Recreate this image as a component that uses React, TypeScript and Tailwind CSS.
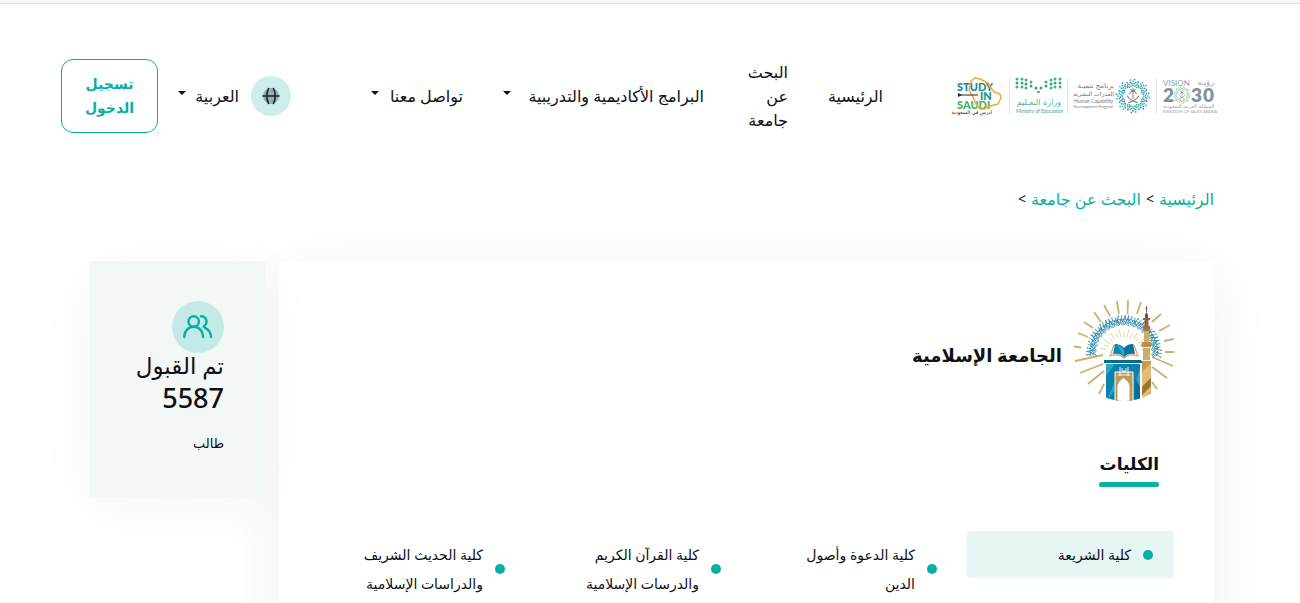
import type { ReactNode } from 'react'
import clsx from 'clsx'

const colleges = [
  { name: 'كلية الشريعة', active: true },
  { name: 'كلية الدعوة وأصول الدين' },
  { name: 'كلية القرآن الكريم والدرسات الإسلامية' },
  { name: 'كلية الحديث الشريف والدراسات الإسلامية' },
]

function Caret() {
  return (
    <svg width="8" height="4" viewBox="0 0 8 4" className="mb-1.5 shrink-0" aria-hidden="true">
      <path d="M0 0h8L4 4z" fill="currentColor" />
    </svg>
  )
}

function Divider() {
  return <span className="h-9 w-px bg-[#e4e4e4]" />
}

// Eight-fold rosette drawn from dots on a few rings
function Rosette({ cx, cy, r, colors }: { cx: number; cy: number; r: number; colors: string[] }) {
  const dots: ReactNode[] = []
  const rings = [0.6, 0.71, 0.82, 0.93]
  rings.forEach((ring, i) => {
    const count = i === 3 ? 24 : 32
    for (let k = 0; k < count; k++) {
      const a = (k / count) * Math.PI * 2 + (i % 2) * 0.1
      const wave = 1 + 0.07 * Math.cos(a * 8)
      dots.push(
        <circle
          key={`${i}-${k}`}
          cx={cx + Math.cos(a) * r * ring * wave}
          cy={cy + Math.sin(a) * r * ring * wave}
          r={r * 0.05}
          fill={colors[(k + i) % colors.length]}
        />,
      )
    }
  })
  return <g>{dots}</g>
}

function Palm({ x, y, s }: { x: number; y: number; s: number }) {
  return (
    <g transform={`translate(${x} ${y}) scale(${s})`} stroke="#7d8992" fill="none" strokeLinecap="round">
      <path d="M0 2V-4M0-4Q-2-5-3-2M0-4Q2-5 3-2M0-4-2-6M0-4 2-6M0-4V-7" strokeWidth="1" />
      <path d="M-5 0Q-3 4 4 6M5 0Q3 4-4 6" strokeWidth="1" />
    </g>
  )
}

function VisionLogo() {
  return (
    <svg width="52" height="40" viewBox="0 0 52 40" direction="ltr" className="overflow-visible" role="img" aria-label="رؤية 2030">
      <g fill="#98a2a8" fontFamily="Lato, sans-serif">
        <text x="0" y="10" fontSize="8">VISION</text>
        <text x="51" y="9" fontSize="8" textAnchor="end" fontFamily="'DejaVu Sans', sans-serif">رؤيـة</text>
        <g fill="#83919a" fontWeight="800" fontSize="19">
          <text x="0" y="26">2</text>
          <text x="28" y="26">3</text>
          <text x="40" y="26">0</text>
        </g>
        <text x="0" y="32" fontSize="5" fontFamily="'DejaVu Sans', sans-serif">المملكة العربية السعودية</text>
        <text x="0" y="37" fontSize="4">KINGDOM OF SAUDI ARABIA</text>
      </g>
      <Rosette cx={19} cy={19} r={9} colors={['#4cb584', '#3f9fb0', '#a5c95b']} />
      <Palm x={19} y={19} s={0.6} />
    </svg>
  )
}

function HumanCapabilityLogo() {
  return (
    <svg width="76" height="40" viewBox="0 0 76 40" direction="ltr" className="overflow-visible" role="img" aria-label="برنامج تنمية القدرات البشرية">
      <g fill="#75797c" textAnchor="end" fontFamily="'DejaVu Sans', sans-serif">
        <text x="40" y="12" fontSize="7">برنامج تنميـة</text>
        <text x="40" y="20" fontSize="6">القدرات البشرية</text>
        <g fontFamily="Lato, sans-serif">
          <text x="39" y="27" fontSize="5">Human Capability</text>
          <text x="39" y="32" fontSize="4">Development Program</text>
        </g>
      </g>
      <Rosette cx={59} cy={20} r={17} colors={['#2b9daf', '#2c8fa5', '#45b3ac']} />
      <Palm x={59} y={20} s={1.1} />
    </svg>
  )
}

const dotRows = [
  [1, 6, 10, 15, 30, 35, 39, 44],
  [1, 6, 10, 15, 20, 25, 30, 35, 39, 44],
  [1, 6, 10, 35, 39, 44],
]

function MinistryLogo() {
  return (
    <svg width="45" height="40" viewBox="0 0 45 40" direction="ltr" className="overflow-visible" role="img" aria-label="وزارة التعليم">
      {dotRows.map((row, r) =>
        row.map((x) => {
          const dip = Math.max(0, 6 - Math.abs(x - 22.5) / 2.5)
          return <circle key={`${r}-${x}`} cx={x} cy={3 + r * 4 + dip} r="1.5" fill={r % 2 ? '#3f9f86' : '#49b27c'} />
        }),
      )}
      <circle cx="22.5" cy="16" r="1.3" fill="#3f9f86" />
      <text x="45" y="29" textAnchor="end" fontSize="8" fill="#4fae93" fontFamily="'DejaVu Sans', sans-serif">
        وزارة التعـليم
      </text>
      <text x="0" y="37" fontSize="5" fill="#3e9fa6" fontFamily="Lato, sans-serif">
        Ministry of Education
      </text>
    </svg>
  )
}

function StudyLogo() {
  return (
    <svg width="46" height="40" viewBox="0 0 46 40" direction="ltr" className="overflow-visible" role="img" aria-label="ادرس في السعودية">
      <g fontFamily="Lato, sans-serif" fontWeight="900" fontSize="11">
        <text x="0" y="15" fill="#16899a">STUDY</text>
        <text x="23" y="24" fill="#1c9389">IN</text>
        <text x="0" y="33" fill="#4cad5c">SAUDI</text>
      </g>
      <path
        d="M14 5 18 2l5 1 8 4 3 5 3 4 6 2 1 4-3 6-8 2-6 3h-4l-4-5-3-7-4-7z"
        fill="none"
        stroke="#f2a93b"
        strokeWidth="1.500"
        strokeLinejoin="round"
      />
      <path d="M2 19H21" stroke="#222" strokeWidth="1" />
      <path d="M1 17l4 2-4 2z" fill="#222" />
      <text x="35" y="38" textAnchor="end" fontSize="5" fill="#111" fontFamily="'DejaVu Sans', sans-serif">
        ادرس في السعودية
      </text>
    </svg>
  )
}

const outerRays =
  'M54 0 53.500 14M43 1l2 13M30 5l6 11M20 12l7 10M10 22l9 6M4 33l10 4M0 46.500l7 1M1 61l28-6M6 73l23-9M14 84l16-13M25 94l5-10M67 2l-4 12M87 14l-9 8M96 25l-11 6M100 39l-10 2M100 52H91M99 66 78 57M93 78 78 67M83 89l-5-7'

// Calligraphy band: upright strokes, bowls and dots laid along the arch
function calligraphy() {
  const out: string[] = []
  const p = (r: number, t: number) => `${(50 + Math.cos(t) * r).toFixed(1)} ${(53 + Math.sin(t) * r).toFixed(1)}`
  for (let i = 0; i <= 72; i++) {
    const a = Math.PI * (0.97 + (i / 72) * 1.05)
    const top = 36 + ((i * 5) % 3)
    const base = 28 + ((i * 7) % 4)
    if (i % 3) out.push(`M${p(base + 2, a)}L${p(top, a + ((i % 4) - 1) * 0.05)}`)
    out.push(`M${p(base, a - 0.04)}Q${p(base - 1, a + 0.04)} ${p(base + 3, a + 0.08)}`)
    if (i % 2) out.push(`M${p(33, a - 0.06)}Q${p(36, a)} ${p(32, a + 0.07)}`)
    if (i % 4 === 0) out.push(`M${p(37, a + 0.03)}L${p(37, a + 0.07)}`)
  }
  return out.join('')
}

function innerRays() {
  const out: string[] = []
  for (let i = 0; i < 15; i++) {
    const a = Math.PI * (1.08 + i * 0.06)
    const r1 = 17
    const r2 = i % 2 ? 22 : 25
    out.push(
      `M${(50 + Math.cos(a) * r1).toFixed(1)} ${(54 + Math.sin(a) * r1).toFixed(1)}L${(50 + Math.cos(a) * r2).toFixed(1)} ${(54 + Math.sin(a) * r2).toFixed(1)}`,
    )
  }
  return out.join('')
}

function UniversityLogo() {
  return (
    <svg width="100" height="102" viewBox="0 0 100 102" className="shrink-0" role="img" aria-label="شعار الجامعة الإسلامية">
      <clipPath id="seal">
        <circle cx="50" cy="50" r="51" />
      </clipPath>
      <path d={outerRays} stroke="#cfb068" strokeWidth="1.800" />
      <path d={calligraphy()} stroke="#2685a3" strokeWidth="0.800" fill="none" />
      <path d={innerRays()} stroke="#dcc68e" strokeWidth="0.800" />
      <g>
        <path d="M40 45 36 56q9-3 14 2 5-5 14-2l-4-11q-6 0-10 4-4-4-10-4z" fill="#fff" stroke="#c9ab66" strokeWidth="1.200" />
        <path d="M41 44q6 0 9 4v9q-4-4-11-3z" fill="#0d86b4" />
        <path d="M59 44q-6 0-9 4v9q4-4 11-3z" fill="#0873a0" />
        <path d="m43 44 7 6v7z" fill="#37a9cf" />
      </g>
      <g clipPath="url(#seal)">
        <path d="M30 60h38v3H30z" fill="#086a8f" />
        <path d="M32 64h34v38H32z" fill="#0982ad" />
        <path d="M32 64h9L32 76zM32 102l8-11V84zM66 68l-4 13 4 8z" fill="#31a4c6" />
        <path d="m61 78 5 9v15h-5z" fill="#076d94" />
        <path d="M41 102V72h18v30z" fill="#bd995a" stroke="#fff" strokeWidth="1" />
        <path d="M43.500 102V87q0-5 6-9 6 4 6 9v15z" fill="#fff" />
        <path d="M46 67v9M54 67v9M44 75h12M48 68v3h4v-3M48 72h4" stroke="#fff" strokeWidth="0.900" fill="none" />
        <path d="M68 60h9v38l-9 4z" fill="#c39d55" />
        <path d="m68 72 9-9v14l-9 10zM68 95l9-9v5l-9 9z" fill="#dfbd77" />
        <path d="m68 87 9-9v8l-9 9z" fill="#9f7536" />
      </g>
      <path d="M69 47h7v13h-7z" fill="#d0ad67" />
      <path d="M68 42h9l1 3-2 3h-7l-2-3z" fill="#b8914a" />
      <path d="M70 31h5v11h-5z" fill="#cfad67" />
      <path d="M69 26h7v3l-1.500 2h-4L69 29z" fill="#9b7441" />
      <path d="M70.500 20h4v6h-4zM69 18h7v2h-7z" fill="#8b6540" />
      <path d="M71 18q-1-3 1.500-6 2.500 3 1.500 6z" fill="#70503a" />
      <path d="M72.500 6v6M71.500 8.500h2" stroke="#70503a" strokeWidth="0.900" />
      <path d="M67 60.500h11M69 47.500h7" stroke="#fff" strokeWidth="0.800" />
    </svg>
  )
}

function GlobeIcon() {
  return (
    <svg width="18" height="18" viewBox="0 0 18 18" aria-hidden="true">
      <circle cx="9" cy="9" r="8" fill="#8db0b2" />
      <path
        d="M1 9h16M6.500 1.500q-3.500 7.500 0 15M11.500 1.500q3.500 7.500 0 15"
        fill="none"
        stroke="#1d2130"
        strokeWidth="1.600"
        strokeLinecap="round"
      />
    </svg>
  )
}

function PeopleIcon() {
  return (
    <svg
      width="30"
      height="24"
      viewBox="0 0 30 24"
      fill="none"
      stroke="#07b0a2"
      strokeWidth="2.400"
      strokeLinecap="round"
      aria-hidden="true"
    >
      <circle cx="10.700" cy="6.500" r="5.200" />
      <path d="M1.300 22v-.500a9.400 9.700 0 0 1 18.800 0v.500" />
      <path d="M18 1.300a5.200 5.200 0 0 1 3.800 9q-.800.700-1 1.200.200.600 1 1.100Q28 16 28 22" />
    </svg>
  )
}

function Header() {
  return (
    <header className="flex items-center pt-[55px] pr-[85px] pl-[61px]">
      <a href="#" className="flex shrink-0 items-center gap-[6px]">
        <VisionLogo />
        <Divider />
        <HumanCapabilityLogo />
        <Divider />
        <MinistryLogo />
        <Divider />
        <StudyLogo />
      </a>
      <nav className="mr-[74px] flex items-center gap-10 text-base leading-6 whitespace-nowrap">
        <a href="#" className="w-[55px]">الرئيسية</a>
        <a href="#" className="w-11 whitespace-normal">البحث عن جامعة</a>
        <button type="button" className="flex w-[201px] items-center justify-between">
          البرامج الأكاديمية والتدريبية
          <Caret />
        </button>
        <button type="button" className="flex w-[92px] items-center justify-between">
          تواصل معنا
          <Caret />
        </button>
      </nav>
      <div className="mr-auto flex items-center">
        <span className="flex size-10 items-center justify-center rounded-full bg-[#cdeeec]">
          <GlobeIcon />
        </span>
        <button type="button" className="mr-3 flex w-[61px] items-center justify-between text-base leading-6">
          العربية
          <Caret />
        </button>
        <button
          type="button"
          className="mr-5 h-[74px] w-[97px] rounded-xl border border-[#07b0a2] px-5 text-sm leading-6 font-bold text-[#07b0a2]"
        >
          تسجيل الدخول
        </button>
      </div>
    </header>
  )
}

export default function App() {
  return (
    <div
      dir="rtl"
      className="min-h-screen overflow-hidden bg-white font-['Noto_Sans','DejaVu_Sans',sans-serif] text-[#0f0f14]"
    >
      <div className="h-1 border-b border-[#e0e0e0] bg-[#f7f7f7]" />
      <Header />

      <nav aria-label="مسار التنقل" className="mt-[54px] flex gap-[5px] pr-[86px] text-base leading-6">
        <a href="#" className="text-[#07b0a2]">الرئيسية</a>
        <span className="text-sm leading-6">&gt;</span>
        <a href="#" className="text-[#07b0a2]">البحث عن جامعة</a>
        <span className="text-sm leading-6">&gt;</span>
      </nav>

      <div className="mt-[50px] flex items-start gap-[14px] pr-[86px] pl-[89px]">
        <main className="min-h-[460px] flex-1 bg-white px-10 pt-[39px] shadow-[0_10px_60px_rgba(0,0,0,0.06)]">
          <div className="flex items-center gap-3">
            <UniversityLogo />
            <h1 className="pt-2 text-lg font-bold">الجامعة الإسلامية</h1>
          </div>

          <h2 className="mt-12 mr-[15px] flex w-[60px] flex-col gap-1 text-[17px] leading-7 font-bold whitespace-nowrap">
            الكليات
            <span className="h-[5px] rounded-full bg-[#07b0a2]" />
          </h2>

          <ul className="mt-11 grid grid-cols-4 gap-x-[9px] text-sm">
            {colleges.map((c) => (
              <li
                key={c.name}
                className={clsx(
                  'flex items-center gap-3 self-start rounded py-[9px] pr-[21px] pl-8 leading-[29px]',
                  c.active && 'bg-[#e6f6f5]',
                )}
              >
                <span className="size-[10px] shrink-0 rounded-full bg-[#07b0a2]" />
                <span>{c.name}</span>
              </li>
            ))}
          </ul>
        </main>

        <aside className="h-[236px] w-44 bg-[#f3f8f7] px-[41px] pt-10 shadow-[0_10px_60px_rgba(0,0,0,0.04)]">
          <span className="flex size-[52px] items-center justify-center rounded-full bg-[#c3eae7]">
            <PeopleIcon />
          </span>
          <p className="text-[23px] leading-6 whitespace-nowrap">تم القبول</p>
          <p className="text-[27px] leading-[42px] font-medium">5587</p>
          <p className="mt-3 text-[13px] leading-6">طالب</p>
        </aside>
      </div>
    </div>
  )
}
